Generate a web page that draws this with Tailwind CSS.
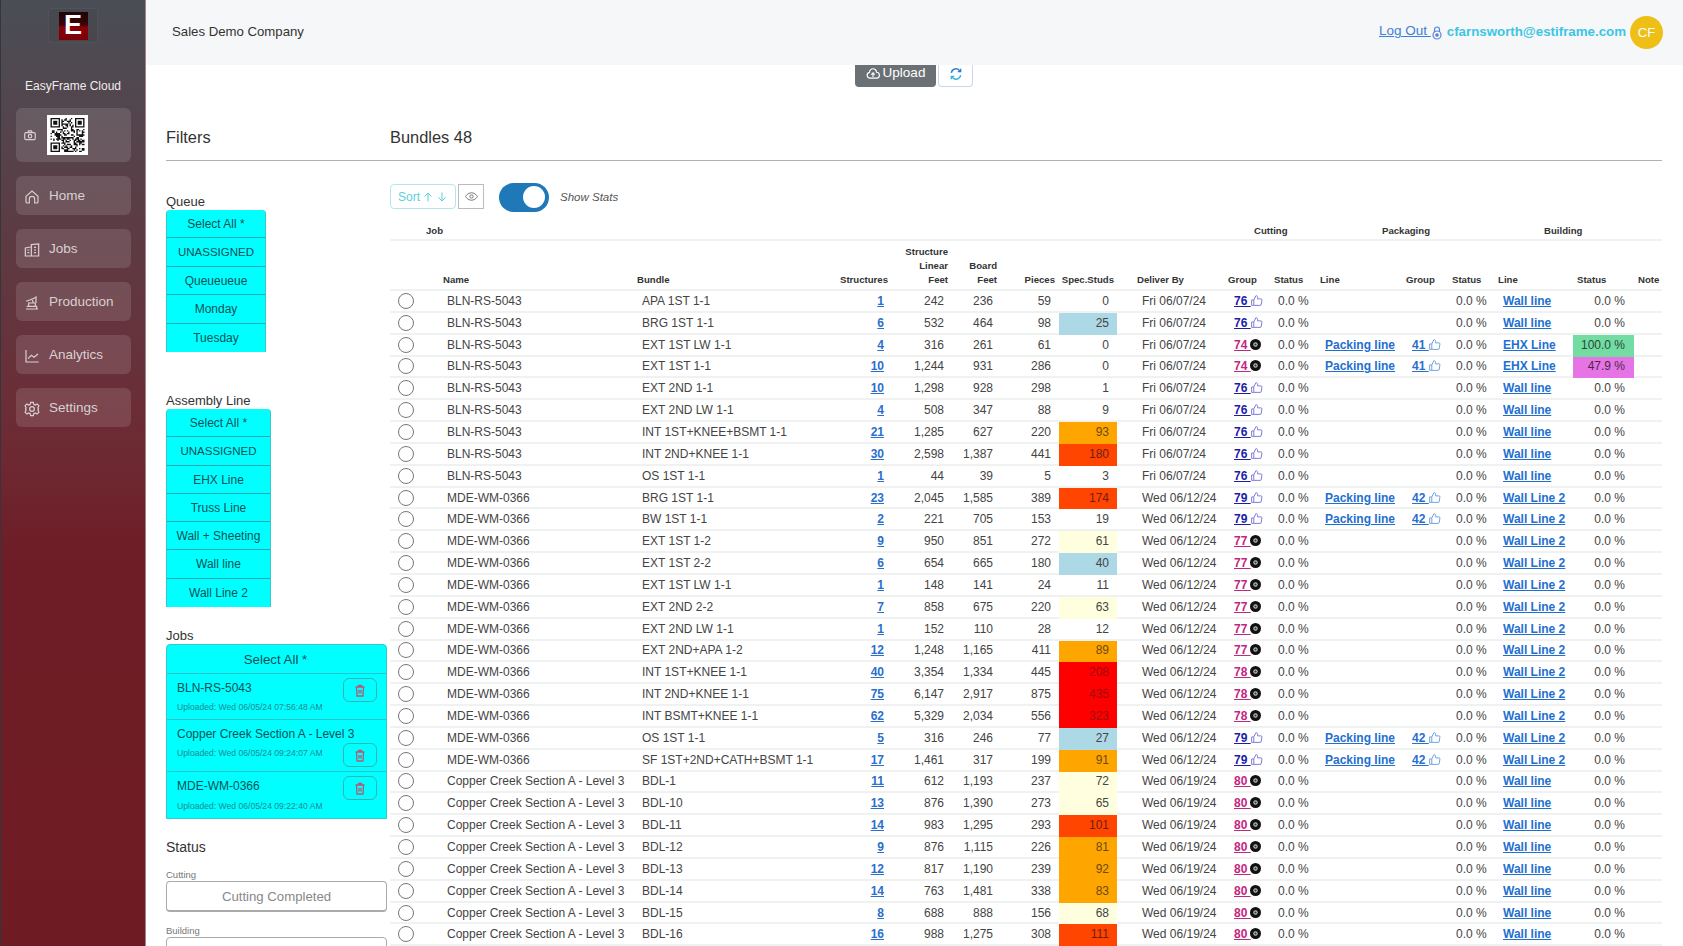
<!DOCTYPE html>
<html lang="en">
<head>
    <meta charset="UTF-8">
    <meta name="viewport" content="width=device-width, initial-scale=1.0">
    <title>EasyFrame Cloud - Bundles</title>
    <script src="https://cdn.jsdelivr.net/npm/@tailwindcss/browser@4"></script>
</head>
<body class="bg-white text-[#333] font-['Liberation_Sans',Arial,sans-serif]">
<div class="flex h-screen overflow-hidden">

    <!-- Sidebar -->
    <aside class="w-[146px] shrink-0 flex flex-col items-center border-l border-l-[#33363a] border-r border-r-[#a08488] bg-[linear-gradient(180deg,#4a4e56_0%,#6d2b34_46%,#6e1c25_60%,#6e1b24_100%)]">
        <div class="mt-2 w-[50px] h-[35px] flex items-center justify-center rounded border border-white/5 bg-black/5">
            <div class="w-[29px] h-[28px] flex items-center justify-center bg-[linear-gradient(180deg,#1c0507_0%,#3a0508_45%,#8c0009_55%,#7c0008_100%)] text-white font-bold text-[27px] leading-none">E</div>
        </div>
        <div class="mt-[35px] h-4 text-[12px] leading-4 text-[#f0ecec]">EasyFrame Cloud</div>
        <nav class="mt-[14px] w-[115px] ml-[1px] flex flex-col gap-[14px] text-[13.5px] text-[#d9d0d2]">
            <div class="h-[54px] flex items-center rounded-md bg-white/12 pl-[7px]">
                <svg class="w-[14px] h-[14px]" viewBox="0 0 24 24" fill="none" stroke="currentColor" stroke-width="2"><path d="M4 8h15a2 2 0 0 1 2 2v8a2 2 0 0 1-2 2H5a2 2 0 0 1-2-2v-8a2 2 0 0 1 1-2zM8 8l1.500-3h5L16 8"/><circle cx="12" cy="14" r="3"/></svg>
                <div id="qr" class="ml-[10px] w-[41px] h-[40px] bg-white p-[3px]"></div>
            </div>
            <a class="h-[39px] flex items-center rounded-md bg-white/12 pl-2 pt-[1px]">
                <svg class="w-[16px] h-[16px] mt-[2px] mr-[9px]" viewBox="0 0 24 24" fill="none" stroke="currentColor" stroke-width="1.800"><path d="M3 11l9-8 9 8v8a2 2 0 0 1-2 2h-3v-6a4 4 0 0 0-8 0v6H5a2 2 0 0 1-2-2z"/></svg>Home
            </a>
            <a class="h-[39px] flex items-center rounded-md bg-white/12 pl-2 pt-[1px]">
                <svg class="w-[16px] h-[16px] mt-[2px] mr-[9px]" viewBox="0 0 24 24" fill="none" stroke="currentColor" stroke-width="1.800"><path d="M2 9l9-2v14H2zM11 4l11-1v18H11zM5 12h3M5 16h3M15 8h3M15 12h3M15 16h3"/></svg>Jobs
            </a>
            <a class="h-[39px] flex items-center rounded-md bg-white/12 pl-2 pt-[1px]">
                <svg class="w-[16px] h-[16px] mt-[2px] mr-[9px]" viewBox="0 0 24 24" fill="none" stroke="currentColor" stroke-width="1.800"><path d="M3 21h18M4 17h15v4M7 17v-5h10v5M5 9l10-4 3-2v9M12 5l2 7M3 9h3"/></svg>Production
            </a>
            <a class="h-[39px] flex items-center rounded-md bg-white/12 pl-2 pt-[1px]">
                <svg class="w-[16px] h-[16px] mt-[2px] mr-[9px]" viewBox="0 0 24 24" fill="none" stroke="currentColor" stroke-width="1.800"><path d="M3 3v18h19M6 16l5-5 4 3 6-5"/></svg>Analytics
            </a>
            <a class="h-[39px] flex items-center rounded-md bg-white/12 pl-2 pt-[1px]">
                <svg class="w-[16px] h-[16px] mt-[2px] mr-[9px]" viewBox="0 0 24 24" fill="none" stroke="currentColor" stroke-width="1.800"><circle cx="12" cy="12" r="3.500"/><path d="M10 2h4l.6 3 2.400 1 2.600-1.600 2.800 2.800L20.800 10l1 2-1 2 1.600 2.800-2.800 2.800L17 18l-2.400 1-.6 3h-4l-.6-3L7 18l-2.600 1.600-2.800-2.800L3.200 14l-1-2 1-2-1.600-2.800 2.800-2.800L7 6l2.400-1z"/></svg>Settings
            </a>
        </nav>
    </aside>

    <main class="flex-1 min-w-0 flex flex-col">
        <!-- Top bar -->
        <header class="h-[65px] shrink-0 bg-[#f6f7f8] flex items-center pl-[26px] pr-[20px]">
            <div class="text-[13.200px] text-[#333] -mt-[1px]">Sales Demo Company</div>
            <div class="ml-auto flex items-center">
                <a class="text-[#3f7fd6] text-[13.500px] underline whitespace-pre -mt-[2px]">Log Out </a>
                <svg class="w-[12px] h-[14px] text-[#5a86d8]" viewBox="0 0 24 28" fill="none" stroke="currentColor" stroke-width="2.400"><path d="M7 12V7a5 5 0 0 1 10 0v5"/><circle cx="12" cy="18" r="8"/><circle cx="12" cy="18" r="2.500" fill="currentColor"/></svg>
                <span class="ml-[4px] text-[#3cc6e4] text-[13.300px] font-bold -mt-[2px]">cfarnsworth@estiframe.com</span>
                <div class="ml-[4px] w-[33px] h-[33px] rounded-full bg-[#eebf17] text-white text-[13px] flex items-center justify-center">CF</div>
            </div>
        </header>

        <div class="flex-1 min-h-0 pl-[20px] pr-[21px]">
            <!-- Upload -->
            <div class="flex justify-center gap-[2px] h-[22px]">
                <button class="w-[81px] h-[22px] rounded-b bg-[#6b7075] text-white text-[13.500px] flex items-center justify-center gap-[3px] pb-[5px]">
                    <svg class="w-[14px] h-[14px]" viewBox="0 0 24 24" fill="none" stroke="currentColor" stroke-width="2"><path d="M7 19a5 5 0 0 1-1-9.900A6 6 0 0 1 18 9a5 5 0 0 1 0 10zM12 17v-6M9 13l3-3 3 3"/></svg>Upload
                </button>
                <button class="w-[35px] h-[22px] rounded-b bg-white border border-t-0 border-[#c9d6ec] flex items-center justify-center pb-[3px]">
                    <svg class="w-[14px] h-[14px]" viewBox="0 0 24 24" fill="none" stroke-width="2.400"><path stroke="#2f7fd8" d="M4 10a8 8 0 0 1 14-4l2 2M20 3v5h-5"/><path stroke="#38b6dc" d="M20 14a8 8 0 0 1-14 4l-2-2M4 21v-5h5"/></svg>
                </button>
            </div>

            <!-- Headings -->
            <div class="mt-[38px] h-[36px] flex items-start border-b border-[#aeb0b2] text-[16.400px] leading-[24px] text-[#333]">
                <h2 class="w-[224px]">Filters</h2>
                <h2>Bundles 48</h2>
            </div>

            <div class="flex">
                <!-- Filters -->
                <section class="w-[224px] shrink-0 text-[#0d5156]">
                    <div class="mt-[33px] h-4 leading-4 text-[13px] text-[#333]">Queue</div>
                    <ul class="w-[100px] text-[12px] text-center bg-[#00ffff] border-x border-[#35c9cc] rounded-t-sm divide-y divide-[#1faab0]">
                        <li class="h-[28.400px] leading-[28px]">Select All *</li>
                        <li class="h-[28.400px] leading-[28px] text-[11.500px]">UNASSIGNED</li>
                        <li class="h-[28.400px] leading-[28px]">Queueueue</li>
                        <li class="h-[28.400px] leading-[28px]">Monday</li>
                        <li class="h-[28.400px] leading-[28px]">Tuesday</li>
                    </ul>

                    <div class="mt-[41px] h-4 leading-4 text-[13px] text-[#333]">Assembly Line</div>
                    <ul class="w-[105px] text-[12px] text-center bg-[#00ffff] border-x border-[#35c9cc] rounded-t-sm divide-y divide-[#1faab0]">
                        <li class="h-[28.300px] leading-[28px]">Select All *</li>
                        <li class="h-[28.300px] leading-[28px] text-[11.500px]">UNASSIGNED</li>
                        <li class="h-[28.300px] leading-[28px]">EHX Line</li>
                        <li class="h-[28.300px] leading-[28px]">Truss Line</li>
                        <li class="h-[28.300px] leading-[28px]">Wall + Sheeting</li>
                        <li class="h-[28.300px] leading-[28px]">Wall line</li>
                        <li class="h-[28.300px] leading-[28px]">Wall Line 2</li>
                    </ul>

                    <div class="mt-[21px] h-4 leading-4 text-[13px] text-[#333]">Jobs</div>
                    <div class="w-[221px] bg-[#00ffff] border border-[#35c9cc] rounded-t-sm divide-y divide-[#2cc4c8]">
                        <div class="h-[29px] leading-[30px] text-center text-[13.300px] pr-[2px]">Select All *</div>
                        <div class="relative h-[46px] pl-[10px]">
                            <div class="pt-[7px] text-[12px] leading-[15px]">BLN-RS-5043</div>
                            <div class="mt-[6px] text-[8.600px] leading-[11px] text-[#1d8a92]">Uploaded: Wed 06/05/24 07:56:48 AM</div>
                            <button class="absolute right-[9px] top-[4px] w-[34px] h-[24px] rounded-md border border-[#38b0b6] flex items-center justify-center">
                                <svg class="w-[12px] h-[13px]" viewBox="0 0 24 26" fill="none" stroke="#b25a78" stroke-width="2.600"><path d="M3 6h18M9 6V3h6v3M5 6l1 18h12l1-18M10 12v7M14 12v7"/></svg>
                            </button>
                        </div>
                        <div class="relative h-[52px] pl-[10px]">
                            <div class="pt-[7px] text-[12px] leading-[15px]">Copper Creek Section A - Level 3</div>
                            <div class="mt-[6px] text-[8.600px] leading-[11px] text-[#1d8a92]">Uploaded: Wed 06/05/24 09:24:07 AM</div>
                            <button class="absolute right-[9px] top-[23px] w-[34px] h-[24px] rounded-md border border-[#38b0b6] flex items-center justify-center">
                                <svg class="w-[12px] h-[13px]" viewBox="0 0 24 26" fill="none" stroke="#b25a78" stroke-width="2.600"><path d="M3 6h18M9 6V3h6v3M5 6l1 18h12l1-18M10 12v7M14 12v7"/></svg>
                            </button>
                        </div>
                        <div class="relative h-[45.700px] pl-[10px]">
                            <div class="pt-[7px] text-[12px] leading-[15px]">MDE-WM-0366</div>
                            <div class="mt-[6.500px] text-[8.600px] leading-[11px] text-[#1d8a92]">Uploaded: Wed 06/05/24 09:22:40 AM</div>
                            <button class="absolute right-[9px] top-[4px] w-[34px] h-[24px] rounded-md border border-[#38b0b6] flex items-center justify-center">
                                <svg class="w-[12px] h-[13px]" viewBox="0 0 24 26" fill="none" stroke="#b25a78" stroke-width="2.600"><path d="M3 6h18M9 6V3h6v3M5 6l1 18h12l1-18M10 12v7M14 12v7"/></svg>
                            </button>
                        </div>
                    </div>

                    <div class="mt-[19px] h-[18px] leading-[18px] text-[14px] text-[#333]">Status</div>
                    <div class="mt-[13px] h-3 leading-3 text-[9.500px] text-[#777]">Cutting</div>
                    <div class="w-[221px] h-[31px] rounded-sm border border-[#aaa] border-b-2 text-center text-[13.200px] leading-[29px] text-[#888]">Cutting Completed</div>
                    <div class="mt-[13px] h-3 leading-3 text-[9.500px] text-[#777]">Building</div>
                    <div class="w-[221px] h-[31px] rounded-sm border border-[#aaa]"></div>
                </section>

                <!-- Bundles -->
                <section class="flex-1 min-w-0">
                    <div class="mt-[23px] h-[28px] flex items-center">
                        <button class="w-[66px] h-[25px] -mt-[3px] rounded-sm border border-[#b4e6ec] text-[#5ccfdc] text-[12px] flex items-center justify-center gap-[2px]">Sort
                            <svg class="w-[12px] h-[12px]" viewBox="0 0 24 24" fill="none" stroke="currentColor" stroke-width="2"><path d="M12 21V4M5 11l7-7 7 7"/></svg>
                            <svg class="w-[12px] h-[12px]" viewBox="0 0 24 24" fill="none" stroke="currentColor" stroke-width="2"><path d="M12 3v17M5 13l7 7 7-7"/></svg>
                        </button>
                        <button class="ml-[2px] w-[26px] h-[25px] -mt-[3px] border border-[#bbb] flex items-center justify-center text-[#777]">
                            <svg class="w-[13px] h-[13px]" viewBox="0 0 24 24" fill="none" stroke="currentColor" stroke-width="1.800"><path d="M1 12s4-7 11-7 11 7 11 7-4 7-11 7-11-7-11-7z"/><circle cx="12" cy="12" r="3"/></svg>
                        </button>
                        <div class="ml-[15px] w-[50px] h-[29px] -mt-[2px] rounded-full bg-[#1f78b8] flex items-center justify-end pr-[4px]">
                            <div class="w-[22px] h-[22px] rounded-full bg-white"></div>
                        </div>
                        <span class="ml-[11px] text-[11.500px] italic text-[#555] -mt-[1px]">Show Stats</span>
                    </div>

                    <table class="mt-[10px] w-[1272px] table-fixed border-separate border-spacing-0 text-[12px] text-[#444]">
                        <colgroup>
                            <col class="w-[53px]"><col class="w-[194px]"><col class="w-[200px]"><col class="w-[55px]"><col class="w-[60px]"><col class="w-[49px]"><col class="w-[58px]"><col class="w-[58px]"><col class="w-[107px]"><col class="w-[46px]"><col class="w-[46px]"><col class="w-[86px]"><col class="w-[46px]"><col class="w-[46px]"><col class="w-[79px]"><col class="w-[61px]"><col class="w-[28px]">
                        </colgroup>
                        <thead class="text-[9.600px] leading-[14px] text-[#333]">
                            <tr>
                                <th colspan="2" class="h-[19px] border-b-2 border-[#f0f1f1] text-left pl-[36px] font-bold">Job</th>
                                <th colspan="7" class="border-b-2 border-[#f0f1f1]"></th>
                                <th colspan="3" class="border-b-2 border-[#f0f1f1] text-left pl-[30px] font-bold">Cutting</th>
                                <th colspan="2" class="border-b-2 border-[#f0f1f1] text-left font-bold"><span class="-ml-[20px]">Packaging</span></th>
                                <th colspan="3" class="border-b-2 border-[#f0f1f1] text-left pl-[50px] font-bold">Building</th>
                            </tr>
                            <tr class="align-bottom">
                                <th class="h-[50px] border-b-2 border-[#f0f1f1]"></th>
                                <th class="border-b-2 border-[#f0f1f1] text-left pb-[2px] font-bold">Name</th>
                                <th class="border-b-2 border-[#f0f1f1] text-left pb-[2px] font-bold">Bundle</th>
                                <th class="border-b-2 border-[#f0f1f1] text-right pr-1 pb-[2px] font-bold whitespace-nowrap">Structures</th>
                                <th class="border-b-2 border-[#f0f1f1] text-right pr-1 pb-[2px] font-bold">Structure<br>Linear<br>Feet</th>
                                <th class="border-b-2 border-[#f0f1f1] text-right pr-1 pb-[2px] font-bold">Board<br>Feet</th>
                                <th class="border-b-2 border-[#f0f1f1] text-right pr-1 pb-[2px] font-bold">Pieces</th>
                                <th class="border-b-2 border-[#f0f1f1] text-right pr-[3px] pb-[2px] font-bold whitespace-nowrap">Spec.Studs</th>
                                <th class="border-b-2 border-[#f0f1f1] text-left pl-[20px] pb-[2px] font-bold">Deliver By</th>
                                <th class="border-b-2 border-[#f0f1f1] text-left pl-1 pb-[2px] font-bold">Group</th>
                                <th class="border-b-2 border-[#f0f1f1] text-left pl-1 pb-[2px] font-bold">Status</th>
                                <th class="border-b-2 border-[#f0f1f1] text-left pl-1 pb-[2px] font-bold">Line</th>
                                <th class="border-b-2 border-[#f0f1f1] text-left pl-1 pb-[2px] font-bold">Group</th>
                                <th class="border-b-2 border-[#f0f1f1] text-left pl-1 pb-[2px] font-bold">Status</th>
                                <th class="border-b-2 border-[#f0f1f1] text-left pl-1 pb-[2px] font-bold">Line</th>
                                <th class="border-b-2 border-[#f0f1f1] text-left pl-1 pb-[2px] font-bold">Status</th>
                                <th class="border-b-2 border-[#f0f1f1] text-left pl-1 pb-[2px] font-bold">Note</th>
                            </tr>
                        </thead>
                        <tbody id="bundle-rows"></tbody>
                    </table>
                </section>
            </div>
        </div>
    </main>
</div>

<script>
    // name, bundle, structures, linear feet, board feet, pieces, spec studs, cutting group, packaging group, building status
    const BLN = 'BLN-RS-5043', MDE = 'MDE-WM-0366', CC = 'Copper Creek Section A - Level 3';
    const rows = [
        [BLN,'APA 1ST 1-1',1,'242','236',59,0,76],
        [BLN,'BRG 1ST 1-1',6,'532','464',98,25,76],
        [BLN,'EXT 1ST LW 1-1',4,'316','261',61,0,74,41,'100.0'],
        [BLN,'EXT 1ST 1-1',10,'1,244','931',286,0,74,41,'47.9'],
        [BLN,'EXT 2ND 1-1',10,'1,298','928',298,1,76],
        [BLN,'EXT 2ND LW 1-1',4,'508','347',88,9,76],
        [BLN,'INT 1ST+KNEE+BSMT 1-1',21,'1,285','627',220,93,76],
        [BLN,'INT 2ND+KNEE 1-1',30,'2,598','1,387',441,180,76],
        [BLN,'OS 1ST 1-1',1,'44','39',5,3,76],
        [MDE,'BRG 1ST 1-1',23,'2,045','1,585',389,174,79,42],
        [MDE,'BW 1ST 1-1',2,'221','705',153,19,79,42],
        [MDE,'EXT 1ST 1-2',9,'950','851',272,61,77],
        [MDE,'EXT 1ST 2-2',6,'654','665',180,40,77],
        [MDE,'EXT 1ST LW 1-1',1,'148','141',24,11,77],
        [MDE,'EXT 2ND 2-2',7,'858','675',220,63,77],
        [MDE,'EXT 2ND LW 1-1',1,'152','110',28,12,77],
        [MDE,'EXT 2ND+APA 1-2',12,'1,248','1,165',411,89,77],
        [MDE,'INT 1ST+KNEE 1-1',40,'3,354','1,334',445,208,78],
        [MDE,'INT 2ND+KNEE 1-1',75,'6,147','2,917',875,435,78],
        [MDE,'INT BSMT+KNEE 1-1',62,'5,329','2,034',556,323,78],
        [MDE,'OS 1ST 1-1',5,'316','246',77,27,79,42],
        [MDE,'SF 1ST+2ND+CATH+BSMT 1-1',17,'1,461','317',199,91,79,42],
        [CC,'BDL-1',11,'612','1,193',237,72,80],
        [CC,'BDL-10',13,'876','1,390',273,65,80],
        [CC,'BDL-11',14,'983','1,295',293,101,80],
        [CC,'BDL-12',9,'876','1,115',226,81,80],
        [CC,'BDL-13',12,'817','1,190',239,92,80],
        [CC,'BDL-14',14,'763','1,481',338,83,80],
        [CC,'BDL-15',8,'688','888',156,68,80],
        [CC,'BDL-16',16,'988','1,275',308,111,80],
    ];

    function specClass(n) {
        if (n < 20) return 'border-[#f0f1f1]';
        if (n <= 40) return 'bg-[#add8e6] border-transparent';
        if (n < 80) return 'bg-[#ffffe0] border-transparent';
        if (n < 100) return 'bg-[#ffa500] border-transparent text-[#6b4a10]';
        if (n < 200) return 'bg-[#ff4500] border-transparent text-[#6e1f10]';
        return 'bg-[#ff0000] border-transparent text-[#a00c0c]';
    }

    function thumb(color) {
        return `<svg class="inline-block w-[13px] h-[13px] -ml-[1px] align-[-2px] ${color}" viewBox="0 0 24 24" fill="none" stroke="currentColor" stroke-width="1.800"><path d="M7 11v10H3V11zM7 11l4-8c1.500 0 3 1 3 3v3h6a2 2 0 0 1 2 2.300l-1.200 7.500A2 2 0 0 1 18.800 21H7"/></svg>`;
    }
    const dot = '<svg class="inline-block w-[11px] h-[11px] -ml-[1px] align-[-1px]" viewBox="0 0 10 10"><circle cx="5" cy="5" r="5" fill="#111"/><circle cx="5" cy="5" r="2" fill="#bbb"/><circle cx="5" cy="5" r="1" fill="#333"/></svg>';
    const line = 'border-b-2 border-[#f0f1f1]';

    document.getElementById('bundle-rows').innerHTML = rows.map(r => {
        const [name, bundle, structs, linear, board, pieces, spec, cut, pack, build] = r;
        const date = name === BLN ? 'Fri 06/07/24' : name === MDE ? 'Wed 06/12/24' : 'Wed 06/19/24';
        const thumbs = cut === 76 || cut === 79;
        const wall = name === MDE ? 'Wall Line 2' : pack === 41 ? 'EHX Line' : 'Wall line';
        const buildBg = build === '100.0' ? 'bg-[#72dca2] border-transparent text-[#2a4a38]' : build === '47.9' ? 'bg-[#e674e4] border-transparent text-[#4a2a4a]' : line;
        return `<tr>
            <td class="h-[21.850px] ${line} pl-2"><span class="block w-[16px] h-[16px] rounded-full border border-[#777] bg-white"></span></td>
            <td class="${line} pl-1 whitespace-nowrap">${name}</td>
            <td class="${line} pl-[5px] whitespace-nowrap">${bundle}</td>
            <td class="${line} text-right pr-2"><a class="underline font-bold text-[#2a6fcc]">${structs}</a></td>
            <td class="${line} text-right pr-2">${linear}</td>
            <td class="${line} text-right pr-2">${board}</td>
            <td class="${line} text-right pr-2">${pieces}</td>
            <td class="border-b-2 text-right pr-2 ${specClass(spec)}">${spec}</td>
            <td class="${line} pl-[25px] whitespace-nowrap">${date}</td>
            <td class="${line} pl-[10px] whitespace-nowrap"><a class="underline font-bold ${thumbs ? 'text-[#1c1ca8]' : 'text-[#c4257f]'}">${cut}&nbsp;</a>${thumbs ? thumb('text-[#7a78dc]') : dot}</td>
            <td class="${line} pl-2 whitespace-nowrap">0.0 %</td>
            <td class="${line} pl-[9px] whitespace-nowrap">${pack ? '<a class="underline font-bold text-[#1f6fd0]">Packing line</a>' : ''}</td>
            <td class="${line} pl-[10px] whitespace-nowrap">${pack ? `<a class="underline font-bold text-[#2a6fcc]">${pack}&nbsp;</a>${thumb('text-[#6f9fe0]')}` : ''}</td>
            <td class="${line} pl-2 whitespace-nowrap">0.0 %</td>
            <td class="${line} pl-[9px] whitespace-nowrap"><a class="underline font-bold text-[#1f6fd0]">${wall}</a></td>
            <td class="border-b-2 text-right pr-[9px] whitespace-nowrap ${buildBg}">${build || '0.0'} %</td>
            <td class="${line}"></td>
        </tr>`;
    }).join('');

    // placeholder QR modules, fixed seed so the picture stays the same
    const size = 25;
    let seed = 7, d = '';
    const finder = (x, y) => x >= 0 && x < 7 && y >= 0 && y < 7 && (x === 0 || x === 6 || y === 0 || y === 6 || (x >= 2 && x <= 4 && y >= 2 && y <= 4));
    for (let y = 0; y < size; y++) {
        for (let x = 0; x < size; x++) {
            const inF = (x < 8 && y < 8) || (x > 16 && y < 8) || (x < 8 && y > 16);
            seed = (seed * 137 + 59) % 1009;
            const on = inF ? finder(x, y) || finder(x - 18, y) || finder(x, y - 18) : seed % 2 === 0;
            if (on) d += `M${x} ${y}h1v1h-1z`;
        }
    }
    document.getElementById('qr').innerHTML = `<svg class="w-full h-full" viewBox="0 0 ${size} ${size}"><path d="${d}" fill="#111"/></svg>`;
</script>
</body>
</html>
